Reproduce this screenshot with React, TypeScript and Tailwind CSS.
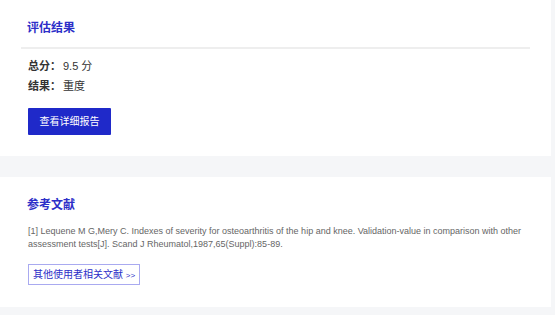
export default function App() {
  return (
    <div
      className="w-[555px] h-[315px] bg-[#f5f6f8] overflow-hidden"
      style={{ fontFamily: '"Liberation Sans", "Noto Sans CJK SC", sans-serif' }}
    >
      {/* 评估结果 */}
      <section className="w-[551px] bg-white pt-[20px] pb-[21px]">
        <h2 className="px-[27px] text-[12px] leading-[16px] font-bold text-[#2d2fc8]">评估结果</h2>
        <div className="mx-[21px] mt-[11px] h-[2px] bg-[#eeeeee]" />
        <div className="px-[28px] mt-[7px] text-[11px] text-[#333]">
          <div className="flex items-center h-[20px]">
            <span className="font-bold w-[35px]">总分：</span>
            <span>9.5 分</span>
          </div>
          <div className="flex items-center h-[20px]">
            <span className="font-bold w-[35px]">结果：</span>
            <span>重度</span>
          </div>
          <button className="mt-[12px] w-[83px] h-[27px] bg-[#1f29c9] text-white text-[10px] rounded-[1px]">
            查看详细报告
          </button>
        </div>
      </section>

      {/* 参考文献 */}
      <section className="w-[551px] bg-white mt-[21px] pt-[20px] pb-[22px] px-[28px]">
        <h2 className="-ml-px text-[12px] leading-[16px] font-bold text-[#2d2fc8]">参考文献</h2>
        <p className="mt-[12px] text-[9px] leading-[13px] text-[#666]">
          [1] Lequene M G,Mery C. Indexes of severity for osteoarthritis of the hip and knee. Validation-value in comparison with other assessment tests[J]. Scand J Rheumatol,1987,65(Suppl):85-89.
        </p>
        <button className="mt-[13px] w-[112px] h-[21px] border border-[#a9aaf0] text-[#2d2fc8] text-[10px] leading-none">
          其他使用者相关文献 <span className="text-[8px]">&gt;&gt;</span>
        </button>
      </section>
    </div>
  );
}
